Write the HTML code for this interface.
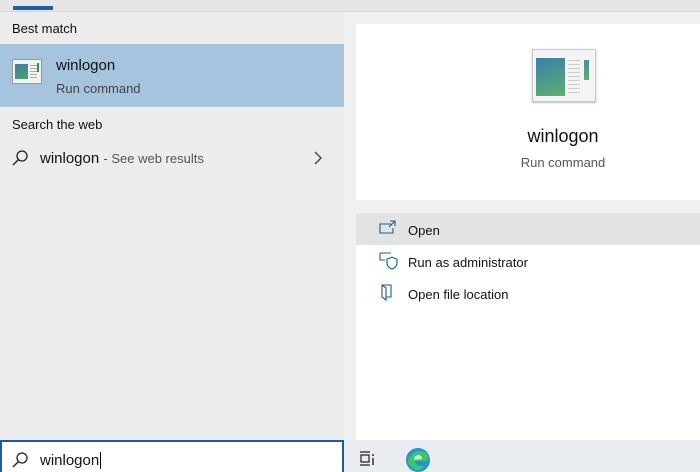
<!DOCTYPE html><html><head><style>
body{margin:0;width:700px;height:472px;overflow:hidden;background:#ececec;font-family:"Liberation Sans",sans-serif;position:relative}
div,span{position:absolute}
.t{white-space:nowrap}
</style></head><body>
<div style="left:0;top:0;width:700px;height:11px;background:#e6e6e6;border-bottom:1px solid #d6d6d6"></div>
<div style="left:13px;top:6px;width:40px;height:4px;background:#1a5fa8"></div>
<div class="t" style="left:12px;top:21px;font-size:13px;color:#111">Best match</div>
<div style="left:0;top:44px;width:344px;height:63px;background:#a6c4de"></div>
<div style="left:12px;top:59px;width:28px;height:23px;background:#f2f2f2;border:1px solid #999">
 <div style="left:2px;top:4px;width:13px;height:15px;background:linear-gradient(160deg,#3a7ea6,#4aa36a)"></div>
 <div style="left:17px;top:5px;width:7px;height:1px;background:#aaa;box-shadow:0 3px #aaa,0 6px #aaa,0 9px #aaa,0 12px #aaa"></div>
 <div style="left:24px;top:3px;width:2px;height:9px;background:#3a8a70"></div>
</div>
<div class="t" style="left:56px;top:57px;font-size:15px;color:#111">winlogon</div>
<div class="t" style="left:56px;top:81px;font-size:13px;color:#444">Run command</div>
<div class="t" style="left:12px;top:117px;font-size:13px;color:#111">Search the web</div>
<svg style="position:absolute;left:11px;top:149px" width="18" height="18"><circle cx="11" cy="7" r="5" fill="none" stroke="#222" stroke-width="1.3"/><line x1="7.5" y1="10.5" x2="2" y2="16" stroke="#222" stroke-width="1.4"/></svg>
<div class="t" style="left:40px;top:150px;font-size:15px;color:#111">winlogon <span style="position:static;font-size:13px;color:#555">- See web results</span></div>
<svg style="position:absolute;left:313px;top:151px" width="10" height="14"><path d="M2 1 L8 7 L2 13" fill="none" stroke="#444" stroke-width="1.4"/></svg>
<div style="left:344px;top:12px;width:356px;height:428px;background:#f0f0f0"></div>
<div style="left:356px;top:24px;width:344px;height:176px;background:#fff"></div>
<div style="left:532px;top:49px;width:62px;height:51px;background:#f4f4f4;border:1px solid #c8c8c8;box-shadow:0 1px 2px #bbb">
 <div style="left:3px;top:8px;width:29px;height:38px;background:linear-gradient(160deg,#3b7fa8,#5ab070)"></div>
 <div style="left:35px;top:10px;width:12px;height:1px;background:#ccc;box-shadow:0 4px #ccc,0 8px #ccc,0 12px #ccc,0 16px #ccc,0 20px #ccc,0 24px #ccc,0 28px #ccc,0 32px #ccc"></div>
 <div style="left:51px;top:10px;width:5px;height:20px;background:linear-gradient(#4a8fa0,#5aae70)"></div>
</div>
<div class="t" style="left:356px;width:414px;text-align:center;top:126px;font-size:18px;color:#111">winlogon</div>
<div class="t" style="left:356px;width:414px;text-align:center;top:155px;font-size:13px;color:#555">Run command</div>
<div style="left:356px;top:213px;width:344px;height:227px;background:#fff"></div>
<div style="left:356px;top:213px;width:344px;height:32px;background:#e3e3e3"></div>
<svg style="position:absolute;left:379px;top:220px" width="18" height="16"><path d="M12 4H1V13H14V8" fill="none" stroke="#1a5f8a" stroke-width="1.1"/><path d="M11 1H16V6M16 1L10 7" fill="none" stroke="#1a5f8a" stroke-width="1.1"/></svg>
<div class="t" style="left:408px;top:223px;font-size:13px;color:#111">Open</div>
<svg style="position:absolute;left:379px;top:252px" width="20" height="18"><path d="M1 1H12M1 1V8H6" fill="none" stroke="#1a5f8a" stroke-width="1.1"/><path d="M8 7Q12 6 13 5Q14 6 18 7V11Q18 15 13 17Q8 15 8 11Z" fill="none" stroke="#1a5f8a" stroke-width="1.1"/></svg>
<div class="t" style="left:408px;top:255px;font-size:13px;color:#111">Run as administrator</div>
<svg style="position:absolute;left:381px;top:284px" width="16" height="18"><path d="M1 1V13L5 16V4ZM1 1H10V13H5" fill="none" stroke="#1a5f8a" stroke-width="1.1"/></svg>
<div class="t" style="left:408px;top:287px;font-size:13px;color:#111">Open file location</div>
<div style="left:344px;top:440px;width:356px;height:32px;background:#e9ecf0"></div>
<div style="left:0;top:440px;width:340px;height:30px;background:#fff;border:2px solid #1c5c9c;border-bottom:none"></div>
<svg style="position:absolute;left:11px;top:451px" width="18" height="18"><circle cx="11" cy="7" r="5" fill="none" stroke="#222" stroke-width="1.3"/><line x1="7.5" y1="10.5" x2="2" y2="16" stroke="#222" stroke-width="1.4"/></svg>
<div class="t" style="left:40px;top:452px;font-size:15px;color:#111">winlogon<span style="position:static;border-left:1px solid #000;margin-left:1px"></span></div>
<svg style="position:absolute;left:358px;top:450px" width="20" height="18"><path d="M2 2H12M2 15H12M3 5H11V12H3Z" fill="none" stroke="#222" stroke-width="1.2"/><path d="M15 4V6M15 8V15" stroke="#222" stroke-width="1.4"/></svg>
<svg style="position:absolute;left:405px;top:446px" width="28" height="26"><circle cx="13" cy="14" r="12" fill="#2a8fd8"/><path d="M4 12Q10 2 20 6Q26 10 22 15L10 15Q11 21 20 20Q14 27 7 22Q1 17 4 12Z" fill="#3ec46a"/><path d="M9 14Q9 9 14 9Q18 10 17 13Z" fill="#fff" opacity=".7"/></svg>
</body></html>
